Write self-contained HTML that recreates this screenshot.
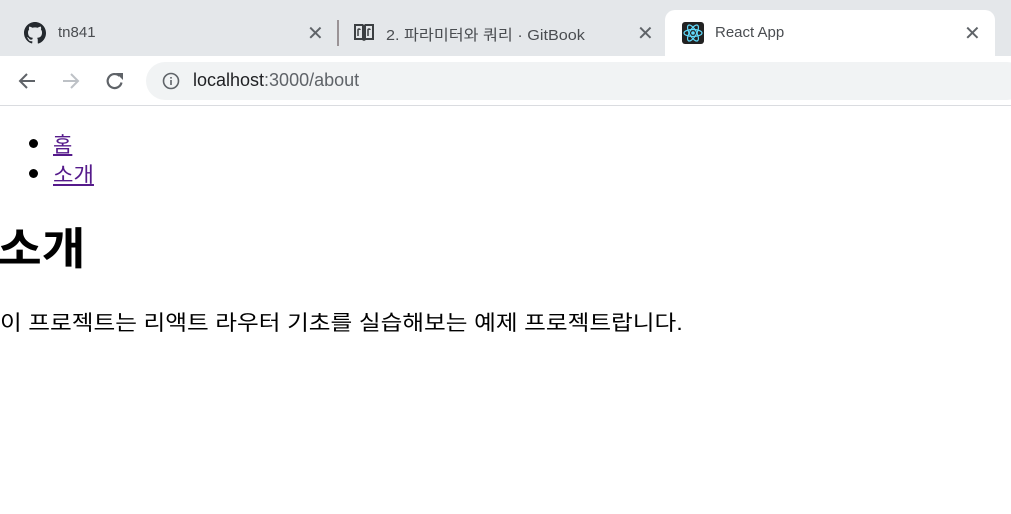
<!DOCTYPE html>
<html><head><meta charset="utf-8"><style>
*{margin:0;padding:0;box-sizing:border-box}
body{width:1011px;height:514px;overflow:hidden;background:#fff;font-family:"Liberation Sans","Noto Sans CJK KR",sans-serif;position:relative}
.strip{position:absolute;left:0;top:0;width:1011px;height:56px;background:#e4e7ea}
.tab{position:absolute;top:10px;height:46px}
.active{background:#fff;border-radius:10px 10px 0 0}
.x{position:absolute;font-size:20px;color:#5f6368;top:21px}
.tb{position:absolute;left:0;top:56px;width:1011px;height:50px;background:#fff;border-bottom:1px solid #dadce0}
.omni{position:absolute;left:146px;top:6px;width:880px;height:38px;border-radius:19px;background:#f1f3f4}
.url{position:absolute;left:193px;top:14px;font-size:18px;color:#202124}
.abs{position:absolute;white-space:nowrap}
.sx{transform-origin:0 50%}
a{color:#551a8b;text-decoration:underline}
</style></head><body>
<div class="strip"></div>
<svg class="abs" style="left:24px;top:22px" width="22" height="22" viewBox="0 0 16 16"><path fill="#24292e" d="M8 0C3.58 0 0 3.58 0 8c0 3.540 2.290 6.530 5.470 7.590.4.07.55-.17.55-.38v-1.330c-2.230.48-2.700-1.070-2.700-1.070-.36-.92-.89-1.170-.89-1.170-.73-.5.06-.49.06-.49.8.06 1.230.82 1.230.82.71 1.230 1.870.87 2.330.66.07-.52.28-.87.51-1.070-1.780-.2-3.640-.89-3.640-3.950 0-.87.31-1.590.82-2.150-.08-.2-.36-1.020.08-2.120 0 0 .67-.21 2.200.82a7.600 7.600 0 0 1 4 0c1.530-1.040 2.200-.82 2.200-.82.44 1.100.16 1.920.08 2.120.51.56.82 1.270.82 2.150 0 3.070-1.870 3.750-3.650 3.950.29.25.54.73.54 1.480v2.200c0 .21.15.46.55.38A8 8 0 0 0 16 8c0-4.420-3.580-8-8-8z"/></svg>
<div class="abs" style="left:58px;top:24px;font-size:15px;color:#4a4d51">tn841</div>
<div class="x" style="left:307px">✕</div>
<div class="abs" style="left:337px;top:20px;width:2px;height:26px;background:#9a9396"></div>
<svg class="abs" style="left:353px;top:22px" width="22" height="20" viewBox="0 0 22 20"><path d="M1 2h9l1 1 1-1h9v16h-8l-2 1-2-1H1z" fill="#3c4043"/><rect x="3" y="4" width="6" height="12" fill="#e4e7ea"/><rect x="13" y="4" width="6" height="12" fill="#e4e7ea"/><path d="M5 14V8a1 1 0 0 1 2 0M15 14V8a1 1 0 0 1 2 0" stroke="#3c4043" stroke-width="1.5" fill="none"/></svg>
<div class="abs sx" style="left:386px;top:24px;font-size:15px;color:#4a4d51;transform:scaleX(1.08)">2. 파라미터와 쿼리 · GitBook</div>
<div class="x" style="left:637px">✕</div>
<div class="tab active" style="left:665px;width:330px"></div>
<svg class="abs" style="left:682px;top:22px" width="22" height="22" viewBox="0 0 22 22"><rect width="22" height="22" rx="3" fill="#222"/><g fill="none" stroke="#61dafb" stroke-width="1.2"><ellipse cx="11" cy="11" rx="9" ry="3.5"/><ellipse cx="11" cy="11" rx="9" ry="3.5" transform="rotate(60 11 11)"/><ellipse cx="11" cy="11" rx="9" ry="3.5" transform="rotate(120 11 11)"/></g><circle cx="11" cy="11" r="1.8" fill="#61dafb"/></svg>
<div class="abs" style="left:715px;top:24px;font-size:15px;color:#4a4d51">React App</div>
<div class="x" style="left:964px">✕</div>
<div class="tb"><div class="omni"></div>
<svg class="abs" style="left:16px;top:14px" width="22" height="22" viewBox="0 0 22 22"><path d="M19 11H4M11 4l-7 7 7 7" stroke="#5f6368" stroke-width="2" fill="none"/></svg>
<svg class="abs" style="left:60px;top:14px" width="22" height="22" viewBox="0 0 22 22"><path d="M3 11h15M11 4l7 7-7 7" stroke="#bdc1c6" stroke-width="2" fill="none"/></svg>
<svg class="abs" style="left:104px;top:14px" width="22" height="22" viewBox="0 0 22 22"><path d="M17.5 12.5A7 7 0 1 1 15.5 6" stroke="#5f6368" stroke-width="2.2" fill="none"/><path d="M12 3h7v7z" fill="#5f6368"/></svg>
<svg class="abs" style="left:162px;top:16px" width="18" height="18" viewBox="0 0 18 18"><circle cx="9" cy="9" r="7.5" fill="none" stroke="#5f6368" stroke-width="1.6"/><rect x="8.2" y="8" width="1.6" height="5" fill="#5f6368"/><rect x="8.2" y="5" width="1.6" height="1.6" fill="#5f6368"/></svg>
<div class="url">localhost<span style="color:#5f6368">:3000/about</span></div>
</div>
<div class="abs" style="left:29px;top:139px;width:9px;height:9px;border-radius:50%;background:#000"></div>
<div class="abs" style="left:29px;top:169px;width:9px;height:9px;border-radius:50%;background:#000"></div>
<div class="abs" style="left:53px;top:131px;font-size:21px;line-height:30px"><a>홈</a></div>
<div class="abs sx" style="left:53px;top:161px;font-size:21px;line-height:30px;transform:scaleX(1.06)"><a>소개</a></div>
<div class="abs sx" style="left:-2px;top:222px;font-size:44px;font-weight:bold;line-height:56px;transform:scaleX(1.08)">소개</div>
<div class="abs sx" style="left:0;top:309px;font-size:21px;line-height:30px;transform:scaleX(1.125)">이 프로젝트는 리액트 라우터 기초를 실습해보는 예제 프로젝트랍니다.</div>
</body></html>
